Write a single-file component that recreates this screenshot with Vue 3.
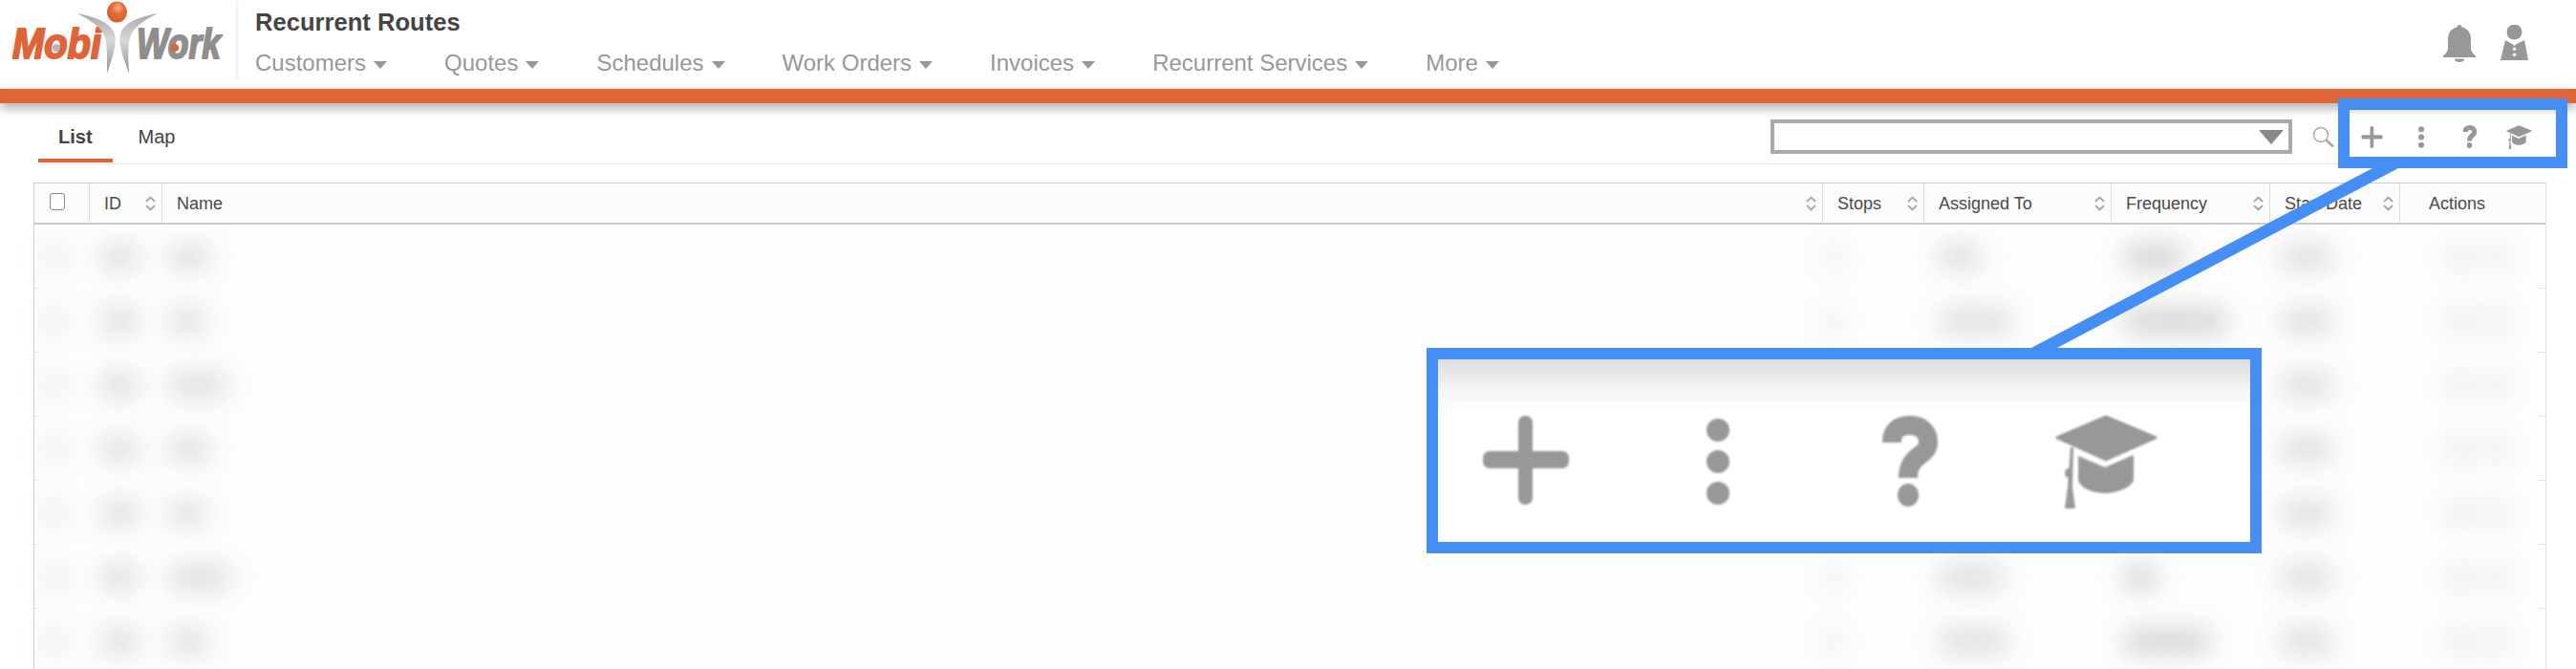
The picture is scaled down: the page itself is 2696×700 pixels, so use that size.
<script setup>
const nav = ['Customers', 'Quotes', 'Schedules', 'Work Orders', 'Invoices', 'Recurrent Services', 'More']
const columns = [
  { key: 'check' },
  { key: 'id', label: 'ID', sort: true },
  { key: 'name', label: 'Name', sort: true },
  { key: 'stops', label: 'Stops', sort: true },
  { key: 'assigned', label: 'Assigned To', sort: true },
  { key: 'frequency', label: 'Frequency', sort: true },
  { key: 'start', label: 'Start Date', sort: true },
  { key: 'actions', label: 'Actions' }
]
const rows = [
  { name: 44, assigned: 46, freq: 66 },
  { name: 40, assigned: 78, freq: 110 },
  { name: 62, assigned: 60, freq: 60 },
  { name: 44, assigned: 70, freq: 74 },
  { name: 40, assigned: 62, freq: 70 },
  { name: 66, assigned: 70, freq: 36 },
  { name: 42, assigned: 74, freq: 92 }
]
</script>

<template>
  <div class="page">
    <svg class="defs" width="0" height="0" aria-hidden="true">
      <defs>
        <symbol id="i-plus" viewBox="0 0 90 93">
          <rect x="0" y="37" width="90" height="18" rx="7" />
          <rect x="37" y="0" width="15" height="93" rx="7" />
        </symbol>
        <symbol id="i-dots" viewBox="0 0 24 90">
          <ellipse cx="12" cy="12" rx="12" ry="12" />
          <ellipse cx="12" cy="45" rx="12" ry="12" />
          <ellipse cx="12" cy="78" rx="12" ry="12" />
        </symbol>
        <symbol id="i-help" viewBox="0 0 60 95">
          <path d="M11 28C11 15 19 10 30 10C42 10 49 17 49 28C49 43 28 40 28 65" fill="none" stroke="#999797" stroke-width="20" />
          <ellipse cx="28" cy="83" rx="11" ry="12" />
        </symbol>
        <symbol id="i-cap" viewBox="0 0 107 97">
          <path d="M53 1L105 23L53 46L2 23Z" stroke="#999797" stroke-width="3" stroke-linejoin="round" />
          <path d="M24 42L52 54L82 41V66C82 74 66 81 52 81C37 81 24 74 24 66Z" />
          <path d="M16 33L19 33L18 75L21 97H10L13 75Z" />
          <ellipse cx="14" cy="60" rx="4" ry="5" />
        </symbol>
      </defs>
    </svg>

    <header class="header">
      <svg class="logo" viewBox="0 0 240 84" width="240" height="84" role="img" aria-label="MobiWork">
        <defs>
          <radialGradient id="ball" cx="0.55" cy="0.3" r="0.7">
            <stop offset="0" stop-color="#f6b08f" />
            <stop offset="0.4" stop-color="#e56f3c" />
            <stop offset="1" stop-color="#d85a28" />
          </radialGradient>
          <linearGradient id="arm" x1="0" y1="0" x2="0" y2="1">
            <stop offset="0" stop-color="#a9a9a9" />
            <stop offset="0.45" stop-color="#d8d8d8" />
            <stop offset="1" stop-color="#8e8e8e" />
          </linearGradient>
        </defs>
        <text class="logo-text" x="13" y="60.500" textLength="93" lengthAdjust="spacingAndGlyphs" fill="#df6437" stroke="#df6437">Mobi</text>
        <text class="logo-text" x="143" y="60.500" textLength="88" lengthAdjust="spacingAndGlyphs" fill="#8f8d8d" stroke="#8f8d8d">Work</text>
        <circle cx="59" cy="50" r="4" fill="#b4b4b4" />
        <circle cx="183" cy="50" r="4" fill="#df6437" />
        <path d="M81 14C97 17 113 22 119 33C124 44 117 62 112 77C112 60 113 42 107 33C101 25 90 19 81 14Z" fill="url(#arm)" />
        <path d="M165 14C149 17 132 22 127 33C122 44 130 62 135 77C134 60 133 42 139 33C145 25 155 19 165 14Z" fill="url(#arm)" />
        <ellipse cx="122.500" cy="12.500" rx="10.500" ry="11" fill="url(#ball)" />
      </svg>
      <div class="head-main">
        <div class="title">Recurrent Routes</div>
        <nav class="nav">
          <a v-for="item in nav" :key="item" class="nav-item">{{ item }}<i class="caret"></i></a>
        </nav>
      </div>
      <div class="head-icons">
        <svg width="34" height="39" viewBox="0 0 34 39" fill="#999797">
          <path d="M17 0c1.500 0 2.500 1 2.500 2.500 6 1.200 9.500 6 9.500 12v10c0 3 2.500 6 5 8V34H0v-1.500c2.500-2 5-5 5-8v-10c0-6 3.500-10.800 9.500-12C14.500 1 15.500 0 17 0z" />
          <path d="M12 35.500h10c0 2-2 3.500-5 3.500s-5-1.500-5-3.500z" />
        </svg>
        <svg width="29" height="37" viewBox="0 0 29 37" fill="#999797">
          <circle cx="14.500" cy="7.500" r="8" />
          <path d="M5 16L13 20.500L14.500 22L16 20.500L25 16L29 37H0Z" />
          <circle cx="14.500" cy="25.300" r="1.700" fill="#fff" />
          <circle cx="14.500" cy="31.300" r="1.700" fill="#fff" />
        </svg>
      </div>
    </header>
    <div class="accent"></div>

    <main class="main">
      <div class="tabbar">
        <a class="tab active">List</a>
        <a class="tab">Map</a>
        <div class="tools">
          <div class="select"><i class="select-arrow"></i></div>
          <svg class="search" width="23" height="22" viewBox="0 0 23 22" fill="none" stroke="#aaa">
            <circle cx="9" cy="9" r="7.500" stroke-width="1.500" />
            <path d="M14.500 14.500L22 21.500" stroke-width="2.800" />
          </svg>
          <div class="actions small">
            <svg class="ic plus"><use href="#i-plus" /></svg>
            <svg class="ic dots"><use href="#i-dots" /></svg>
            <svg class="ic help"><use href="#i-help" /></svg>
            <svg class="ic cap"><use href="#i-cap" /></svg>
          </div>
        </div>
      </div>

      <div class="table">
        <div class="thead">
          <div v-for="col in columns" :key="col.key" class="th" :class="'c-' + col.key">
            <i v-if="col.key === 'check'" class="check"></i>
            <span v-else>{{ col.label }}</span>
            <svg v-if="col.sort" class="sort" width="11" height="16" viewBox="0 0 11 16" fill="none" stroke="#a8a8a8" stroke-width="1.800">
              <path d="M1 6L5.500 1.500L10 6" />
              <path d="M1 10L5.500 14.500L10 10" />
            </svg>
          </div>
        </div>
        <div v-for="(row, i) in rows" :key="i" class="tr">
          <div class="td c-check"><i class="blob faint" style="width: 26px"></i></div>
          <div class="td c-id"><i class="blob" style="width: 42px"></i></div>
          <div class="td c-name"><i class="blob" :style="{ width: row.name + 'px' }"></i></div>
          <div class="td c-stops"><i class="blob faint" style="width: 16px"></i></div>
          <div class="td c-assigned"><i class="blob" :style="{ width: row.assigned + 'px' }"></i></div>
          <div class="td c-frequency"><i class="blob dark" :style="{ width: row.freq + 'px' }"></i></div>
          <div class="td c-start"><i class="blob" style="width: 56px"></i></div>
          <div class="td c-actions"><i class="blob faint" style="width: 30px"></i><i class="blob faint" style="width: 26px"></i></div>
        </div>
      </div>
    </main>

    <!-- Annotation: callout frame, connector and magnified detail lie over the page -->
    <div class="frame frame-small"></div>
    <svg class="connector" width="2696" height="700" viewBox="0 0 2696 700">
      <polygon points="2483,176 2510,176 2151,365 2124,365" fill="#448ef6" />
    </svg>
    <div class="frame frame-big">
      <div class="actions big">
        <svg class="ic plus"><use href="#i-plus" /></svg>
        <svg class="ic dots"><use href="#i-dots" /></svg>
        <svg class="ic help"><use href="#i-help" /></svg>
        <svg class="ic cap"><use href="#i-cap" /></svg>
      </div>
    </div>
  </div>
</template>

<style scoped>
.page {
  position: relative;
  width: 2696px;
  height: 700px;
  overflow: hidden;
  background: #fff;
  font-family: "Liberation Sans", Arial, sans-serif;
  color: #444;
}
.defs { position: absolute; }

.header {
  display: flex;
  height: 93px;
}
.logo { flex: none; margin-right: 7px; }
.logo-text {
  font-family: "Liberation Sans", Arial, sans-serif;
  font-size: 44px;
  font-weight: 700;
  font-style: italic;
  stroke-width: 2px;
  stroke-linejoin: round;
}
.head-main {
  border-left: 2px solid #f0f0f0;
  margin: 2px 0 10px;
  padding: 8px 0 0 18px;
}
.title {
  font-size: 25.600px;
  line-height: 26px;
  font-weight: 700;
  color: #444;
  margin-bottom: 16px;
}
.nav { display: flex; gap: 60px; }
.nav-item {
  display: flex;
  align-items: center;
  font-size: 24px;
  line-height: 28px;
  color: #999797;
  white-space: nowrap;
}
.caret {
  margin: 3px 0 0 8px;
  border-left: 7px solid transparent;
  border-right: 7px solid transparent;
  border-top: 8px solid #999797;
}
.head-icons {
  display: flex;
  gap: 26px;
  align-items: flex-start;
  margin-left: auto;
  padding: 26px 50px 0 0;
}

.accent {
  position: relative;
  height: 15px;
  background: #df6437;
  box-shadow: 0 5px 12px rgba(0, 0, 0, 0.32);
}

.main { padding: 0 31px 0 35px; }
.tabbar {
  display: flex;
  height: 63px;
  padding-left: 5px;
  border-bottom: 1px solid #e5e5e5;
}
.tab {
  height: 62px;
  margin-bottom: 1px;
  padding: 25px 21px 0;
  box-sizing: border-box;
  font-size: 20px;
  line-height: 20px;
  color: #444;
}
.tab + .tab { margin-left: 6px; }
.tab.active {
  font-weight: 700;
  border-bottom: 4px solid #df6437;
}
.tools {
  display: flex;
  align-items: flex-start;
  margin-left: auto;
  margin-right: 15px;
  padding-top: 17px;
}
.select {
  display: flex;
  align-items: center;
  justify-content: flex-end;
  width: 546px;
  height: 36px;
  box-sizing: border-box;
  border: 4px solid #aaa;
  padding-right: 5px;
}
.select-arrow {
  border-left: 13px solid transparent;
  border-right: 13px solid transparent;
  border-top: 15px solid #8a8888;
}
.search { margin: 7px 28px 0 21px; }

.actions { display: flex; align-items: center; }
.ic { display: block; fill: #999797; }
.small { height: 24px; margin-top: 6px; }
.small .plus { width: 23px; height: 23px; }
.small .dots { width: 6px; height: 23px; margin-left: 37px; }
.small .help { width: 16px; height: 24px; margin-left: 40px; }
.small .cap { width: 27px; height: 25px; margin-left: 30px; }

.table { margin-top: 19px; }
.thead, .tr {
  display: grid;
  grid-template-columns: 58px 76px 1738px 106px 196px 166px 136px 152px;
  width: 2630px;
  box-sizing: border-box;
}
.thead {
  height: 44px;
  background: #fbfbfb;
  border: 1px solid #ccc;
  border-width: 1px 1px 2px;
  border-right-color: #e5e5e5;
}
.th {
  display: flex;
  align-items: center;
  justify-content: space-between;
  padding: 2px 6px 0 15px;
  border-right: 1px solid #ddd;
  font-size: 18px;
  color: #4a4a4a;
  white-space: nowrap;
}
.th:last-child { border-right: 0; padding-left: 30px; }
.th.c-check { padding: 0 0 0 16px; justify-content: flex-start; }
.sort { margin-top: -2px; }
.check {
  width: 16px;
  height: 18px;
  box-sizing: border-box;
  background: #fff;
  border: 1px solid #8a8a8a;
  border-radius: 3px;
  margin-top: -4px;
}
.tr {
  position: relative;
  height: 67px;
  border-left: 1px solid #ccc;
  border-right: 1px solid #e5e5e5;
  background:
    linear-gradient(#e5e5e5, #e5e5e5) left bottom / 4px 1px no-repeat,
    linear-gradient(#e5e5e5, #e5e5e5) right bottom / 8px 1px no-repeat,
    linear-gradient(#fdfdfd, #fdfdfd) 4px 0 / calc(100% - 12px) 100% no-repeat;
}
.td {
  display: flex;
  align-items: center;
  gap: 10px;
  padding-left: 8px;
}
.c-id.td { padding-left: 10px; }
.c-name.td { padding-left: 6px; }
.c-stops.td { padding-left: 2px; }
.c-assigned.td { padding-left: 14px; }
.c-frequency.td { padding-left: 12px; }
.c-start.td { padding-left: 10px; }
.c-actions.td { padding-left: 48px; }
.blob {
  display: block;
  height: 26px;
  background: #dedede;
  border-radius: 13px;
  filter: blur(13px);
}
.blob.dark { background: #d4d4d4; }
.blob.faint { background: #ececec; }

.frame {
  position: absolute;
  border: 12.500px solid #448ef6;
  box-sizing: border-box;
}
.frame-small {
  left: 2447px;
  top: 103px;
  width: 240px;
  height: 73px;
}
.connector {
  position: absolute;
  left: 0;
  top: 0;
  pointer-events: none;
}
.frame-big {
  left: 1493px;
  top: 364px;
  width: 874px;
  height: 215px;
  padding: 59px 0 0 47px;
  background: linear-gradient(#dcdddf, #f5f5f5 32px, #fff 56px);
  background-origin: padding-box;
}
.big { align-items: flex-start; filter: blur(1.300px); }
.big .plus { width: 90px; height: 93px; }
.big .dots { width: 24px; height: 90px; margin: 3px 0 0 144px; }
.big .help { width: 60px; height: 95px; margin-left: 159px; }
.big .cap { width: 107px; height: 97px; margin-left: 122px; }
</style>

<style>
html, body { margin: 0; background: #fff; }
</style>
